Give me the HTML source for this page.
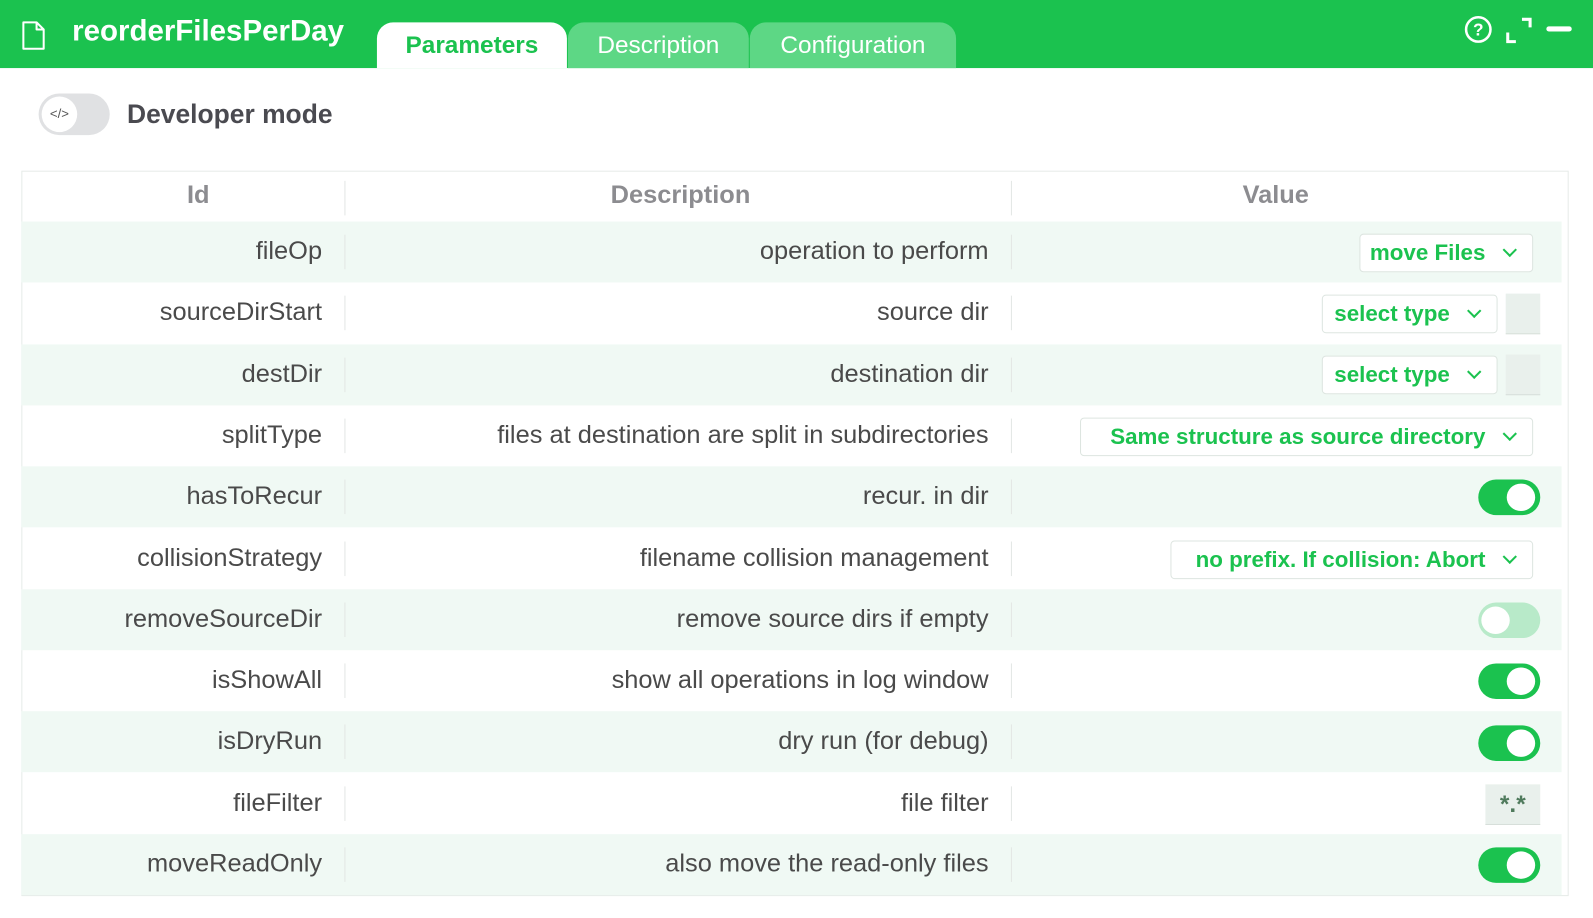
<!DOCTYPE html>
<html><head><meta charset="utf-8"><style>
*{margin:0;padding:0;box-sizing:border-box}
body{width:1593px;height:918px;background:#fff;font-family:"Liberation Sans","DejaVu Sans",sans-serif;position:relative;overflow:hidden;color:#4a4a4a}
#w{position:absolute;left:0;top:0;width:1568px;height:904px;transform:scale(1.016);transform-origin:0 0}
.hdr{position:absolute;left:0;top:0;width:1600px;height:67px;background:#1bc24f}
.title{position:absolute;left:71px;top:15px;font-size:29px;font-weight:bold;color:#fff}
.tab{position:absolute;top:22px;height:45px;border-radius:16px 16px 0 0;font-size:24px;color:#fff;text-align:center;line-height:46px}
.a{position:absolute;font-size:24px;white-space:nowrap}
.row{position:absolute;left:21px;width:1516px;height:60px}
.alt{background:#f0f9f4}
.sep{position:absolute;width:1px;height:34px;background:#e3e6e4}
.id{position:absolute;right:1251px;font-size:25px;color:#4a4a4a}
.ds{position:absolute;right:595px;font-size:25px;color:#4a4a4a}
.sel{position:absolute;height:38px;border:1px solid #dde5e0;border-radius:4px;background:#fff;color:#1bc24f;font-weight:bold;font-size:22px;text-align:right;padding-right:46px;line-height:36px}
.sel:after{content:"";position:absolute;right:17px;top:10px;width:8px;height:8px;border-right:2px solid #1bc24f;border-bottom:2px solid #1bc24f;transform:rotate(45deg)}
.tg{position:absolute;left:1455px;width:61px;height:35px;border-radius:18px;background:#1bc24f}
.tg:after{content:"";position:absolute;left:28px;top:4px;width:28px;height:27px;border-radius:50%;background:#fff}
.tg.off{background:#b8eac9}
.tg.off:after{left:3px}
.gb{position:absolute;left:1482px;width:34px;height:40px;background:#e9f0ec;border-bottom:1px solid #d7dfda}
</style></head><body><div id="w">
<div class="hdr"></div>
<svg style="position:absolute;left:20px;top:20px" width="26" height="30" viewBox="0 0 26 30"><path d="M3 2h13l7 7v19H3z M16 2v7h7" fill="none" stroke="#fff" stroke-width="2" stroke-linejoin="round"/></svg>
<div class="title">reorderFilesPerDay</div>
<div class="tab" style="left:371px;width:187px;background:#fff;color:#1bc24f;font-weight:bold">Parameters</div>
<div class="tab" style="left:559px;width:178px;background:#5dd785">Description</div>
<div class="tab" style="left:738px;width:203px;background:#5dd785">Configuration</div>
<svg style="position:absolute;left:1440px;top:14px" width="30" height="30" viewBox="0 0 30 30"><circle cx="15" cy="15" r="12" fill="none" stroke="#fff" stroke-width="2.5"/><text x="15" y="21" font-size="17" font-weight="bold" fill="#fff" text-anchor="middle" font-family="Liberation Sans">?</text></svg>
<svg style="position:absolute;left:1481px;top:16px" width="28" height="28" viewBox="0 0 28 28"><path d="M3 16v9h8 M17 3h8v8" fill="none" stroke="#fff" stroke-width="3"/></svg>
<div style="position:absolute;left:1522px;top:26px;width:25px;height:5px;border-radius:3px;background:#fff"></div>

<div style="position:absolute;left:38px;top:92px;width:70px;height:41px;border-radius:21px;background:#e0e1e3"></div>
<div style="position:absolute;left:41px;top:95px;width:35px;height:35px;border-radius:50%;background:#fff;font-size:13px;color:#555;text-align:center;line-height:33px">&lt;/&gt;</div>
<div class="a" style="left:125px;top:97px;font-size:26px;font-weight:bold;color:#4a4a50">Developer mode</div>

<div style="position:absolute;left:21px;top:168px;width:1523px;height:714px;border:1px solid #e6ebe8"></div>
<div class="a" style="left:184px;top:178px;font-weight:bold;color:#8c8c90;font-size:25px">Id</div>
<div class="a" style="left:601px;top:178px;font-weight:bold;color:#8c8c90;font-size:25px">Description</div>
<div class="a" style="left:1223px;top:178px;font-weight:bold;color:#8c8c90;font-size:25px">Value</div>
<div class="sep" style="left:339px;top:178px"></div><div class="sep" style="left:995px;top:178px"></div>

<div class="row alt" style="top:218px"></div>
<div class="row" style="top:278px"></div>
<div class="row alt" style="top:339px"></div>
<div class="row" style="top:399px"></div>
<div class="row alt" style="top:459px"></div>
<div class="row" style="top:520px"></div>
<div class="row alt" style="top:580px"></div>
<div class="row" style="top:640px"></div>
<div class="row alt" style="top:700px"></div>
<div class="row" style="top:760px"></div>
<div class="row alt" style="top:821px"></div>

<div class="sep" style="left:339px;top:231px"></div><div class="sep" style="left:995px;top:231px"></div>
<div class="id" style="top:233px">fileOp</div><div class="ds" style="top:233px">operation to perform</div>
<div class="sel" style="left:1338px;top:230px;width:171px">move Files</div>

<div class="sep" style="left:339px;top:291px"></div><div class="sep" style="left:995px;top:291px"></div>
<div class="id" style="top:293px">sourceDirStart</div><div class="ds" style="top:293px">source dir</div>
<div class="sel" style="left:1301px;top:290px;width:173px">select type</div><div class="gb" style="top:289px"></div>

<div class="sep" style="left:339px;top:352px"></div><div class="sep" style="left:995px;top:352px"></div>
<div class="id" style="top:354px">destDir</div><div class="ds" style="top:354px">destination dir</div>
<div class="sel" style="left:1301px;top:350px;width:173px">select type</div><div class="gb" style="top:349px"></div>

<div class="sep" style="left:339px;top:412px"></div><div class="sep" style="left:995px;top:412px"></div>
<div class="id" style="top:414px">splitType</div><div class="ds" style="top:414px">files at destination are split in subdirectories</div>
<div class="sel" style="left:1063px;top:411px;width:446px">Same structure as source directory</div>

<div class="sep" style="left:339px;top:472px"></div><div class="sep" style="left:995px;top:472px"></div>
<div class="id" style="top:474px">hasToRecur</div><div class="ds" style="top:474px">recur. in dir</div>
<div class="tg" style="top:472px"></div>

<div class="sep" style="left:339px;top:533px"></div><div class="sep" style="left:995px;top:533px"></div>
<div class="id" style="top:535px">collisionStrategy</div><div class="ds" style="top:535px">filename collision management</div>
<div class="sel" style="left:1152px;top:532px;width:357px">no prefix. If collision: Abort</div>

<div class="sep" style="left:339px;top:593px"></div><div class="sep" style="left:995px;top:593px"></div>
<div class="id" style="top:595px">removeSourceDir</div><div class="ds" style="top:595px">remove source dirs if empty</div>
<div class="tg off" style="top:593px"></div>

<div class="sep" style="left:339px;top:653px"></div><div class="sep" style="left:995px;top:653px"></div>
<div class="id" style="top:655px">isShowAll</div><div class="ds" style="top:655px">show all operations in log window</div>
<div class="tg" style="top:653px"></div>

<div class="sep" style="left:339px;top:713px"></div><div class="sep" style="left:995px;top:713px"></div>
<div class="id" style="top:715px">isDryRun</div><div class="ds" style="top:715px">dry run (for debug)</div>
<div class="tg" style="top:714px"></div>

<div class="sep" style="left:339px;top:774px"></div><div class="sep" style="left:995px;top:774px"></div>
<div class="id" style="top:776px">fileFilter</div><div class="ds" style="top:776px">file filter</div>
<div class="gb" style="left:1462px;width:54px;top:772px;color:#4f7a5c;font-size:24px;font-weight:bold;text-align:center;line-height:40px">*.*</div>

<div class="sep" style="left:339px;top:834px"></div><div class="sep" style="left:995px;top:834px"></div>
<div class="id" style="top:836px">moveReadOnly</div><div class="ds" style="top:836px">also move the read-only files</div>
<div class="tg" style="top:834px"></div>
</div></body></html>
